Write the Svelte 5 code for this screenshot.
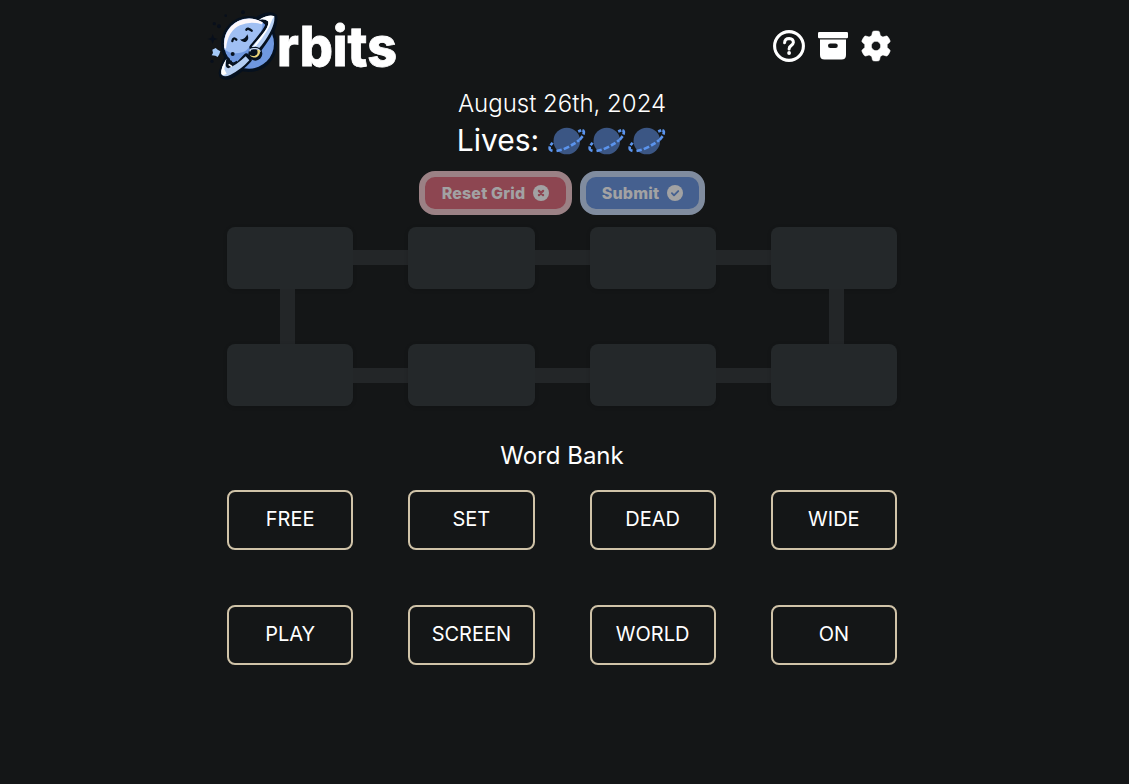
<script>
  const bank = ['FREE', 'SET', 'DEAD', 'WIDE', 'PLAY', 'SCREEN', 'WORLD', 'ON'];
  const lives = [1, 2, 3];
</script>

<div class="page">
  <header>
    <div class="brand">
      <svg class="planet" width="90" height="80" viewBox="-2 -2 270 240" aria-hidden="true">
        <g fill="#080f1b">
          <circle cx="41" cy="54" r="5" /><circle cx="75" cy="30" r="4" /><circle cx="127" cy="20" r="6" /><circle cx="55" cy="62" r="6" /><circle cx="34" cy="167" r="5" />
          <path d="M36 85l4 11 11 4-11 4-4 11-4-11-11-4 11-4z" />
        </g>
        <g fill="#06111f" stroke="#06111f" stroke-width="18" stroke-linejoin="round">
          <circle cx="145" cy="115" r="75" />
          <path d="M176 38Q208 22 221 33Q226 64 186 120Q119 201 84 212Q60 218 64 198Q67 180 80 162Z" />
        </g>
        <circle cx="145" cy="114" r="75" fill="#6f98e0" />
        <path d="M72 132A75 75 0 0 1 186 51Q187 85 149 118Q141 135 125 140Q96 149 72 132Z" fill="#a0bff3" />
        <path d="M71 127Q66 73 112 47Q148 28 186 50L184 56Q148 45 118 59Q81 76 76 129Z" fill="#fcf7fb" />
        <g fill="#06111f" stroke="#06111f" stroke-width="19" stroke-linejoin="round">
          <path d="M204 48Q207 60 185 89L156 125L173 131L188 110Q214 75 217 47Z" />
          <path d="M78 163Q66 186 68 196Q84 199 117 174L137 153L144 162Q118 190 90 207Q68 216 64 202Z" />
        </g>
        <path d="M86 166Q91 186 112 171" fill="none" stroke="#06111f" stroke-width="14" />
        <path d="M175 42Q205 25 221 32Q225 62 183 119L171 132L153 123L185 87Q207 60 202 47Q193 38 175 42Z" fill="#b7d0f5" />
        <path d="M175 42Q207 24 221 32Q215 39 210 53Q204 74 166 121L157 123L185 86Q207 58 202 47Q193 38 175 42Z" fill="#fff" />
        <path d="M77 160Q59 188 62 205Q68 218 90 207Q121 192 146 164L135 152Q108 178 83 188Q71 186 77 160Z" fill="#b5cef2" />
        <path d="M77 160Q59 188 62 205Q66 211 78 204L71 191Q73 174 77 160Z" fill="#fff" />
        <circle cx="164" cy="144" r="21" fill="#06111f" />
        <path d="M147 137Q149 127 162 129Q174 127 179 138" fill="none" stroke="#cadcf8" stroke-width="4" />
        <path d="M176 132A16 16 0 1 1 147 147Q158 155 168 147Q173 141 169 134Z" fill="#e9d479" />
        <g fill="none" stroke="#06111f" stroke-width="7" stroke-linecap="round" stroke-linejoin="round">
          <path d="M95 106Q98 93 107 102M137 72Q140 65 153 75" />
        </g>
        <path d="M118 101Q133 103 140 86Q147 102 136 108Q125 112 118 101Z" fill="#06111f" />
        <circle cx="96" cy="145" r="6" fill="#06111f" />
        <path d="M45 127L51 132L59 137L56 146L51 154L44 150L33 149L37 142L35 132Z" fill="#a6caf8" />
        <path d="M84 176L94 183" stroke="#fff" stroke-width="5" />
      </svg>
      <svg class="name" width="122" height="80" viewBox="0 0 122 80" role="img">
        <text x="-1" y="61" textLength="120" lengthAdjust="spacingAndGlyphs">rbits</text>
      </svg>
    </div>
    <nav>
      <svg width="32" height="32" viewBox="0 0 32 32" fill="none" stroke="#fff">
        <circle cx="16" cy="16" r="14.4" stroke-width="3.1" />
        <path d="M11.6 12.8Q11.8 8.5 16.2 8.5Q20.4 8.7 20.4 12.4Q20.2 14.3 18.1 15.6Q16.1 16.8 16.1 18.9" stroke-width="3" stroke-linecap="round" />
        <circle cx="16.1" cy="23" r="1.9" fill="#fff" stroke="none" />
      </svg>
      <svg class="archive" width="30" height="28" viewBox="0 0 30 28" fill="#fff">
        <rect width="30" height="6.3" rx="1.3" />
        <path fill-rule="evenodd" d="M2 7.4H28V23Q28 27.5 23.5 27.5H6.5Q2 27.5 2 23ZM12.3 11.4A2.3 2.3 0 0 0 12.3 16H17.5A2.3 2.3 0 0 0 17.5 11.4Z" />
      </svg>
      <svg class="gear" width="30" height="30" viewBox="0 0 512 512" fill="#fff">
        <path stroke="#fff" stroke-width="10" d="M495.9 166.6c3.2 8.7 .5 18.4-6.4 24.6l-43.3 39.4c1.1 8.3 1.7 16.8 1.7 25.4s-.6 17.1-1.7 25.4l43.3 39.4c6.9 6.2 9.6 15.9 6.4 24.6c-4.4 11.9-9.7 23.3-15.8 34.3l-4.7 8.1c-6.6 11-14 21.4-22.1 31.2c-5.9 7.2-15.7 9.6-24.5 6.8l-55.7-17.7c-13.4 10.3-28.2 18.9-44 25.4l-12.5 57.1c-2 9.1-9 16.3-18.2 17.8c-13.8 2.3-28 3.5-42.5 3.5s-28.7-1.2-42.5-3.5c-9.2-1.5-16.2-8.7-18.2-17.8l-12.5-57.1c-15.8-6.5-30.6-15.1-44-25.4L83.1 425.9c-8.8 2.8-18.6 .3-24.5-6.8c-8.1-9.8-15.5-20.2-22.1-31.2l-4.7-8.1c-6.1-11-11.4-22.4-15.8-34.3c-3.2-8.7-.5-18.4 6.4-24.6l43.3-39.4C64.6 273.1 64 264.6 64 256s.6-17.1 1.7-25.4L22.4 191.2c-6.9-6.2-9.6-15.9-6.4-24.6c4.4-11.9 9.7-23.3 15.8-34.3l4.7-8.1c6.6-11 14-21.4 22.1-31.2c5.9-7.2 15.7-9.6 24.5-6.8l55.7 17.7c13.4-10.3 28.2-18.9 44-25.4l12.5-57.1c2-9.1 9-16.3 18.2-17.8C227.3 1.2 241.5 0 256 0s28.7 1.2 42.5 3.5c9.2 1.5 16.2 8.7 18.2 17.8l12.5 57.1c15.8 6.5 30.6 15.1 44 25.4l55.7-17.7c8.8-2.8 18.6-.3 24.5 6.8c8.1 9.8 15.5 20.2 22.1 31.2l4.7 8.1c6.1 11 11.4 22.4 15.8 34.3zM256 336a80 80 0 1 0 0-160 80 80 0 1 0 0 160z" />
      </svg>
    </nav>
  </header>

  <div class="date">August 26th, 2024</div>
  <div class="lives">
    <span>Lives:</span>
    {#each lives as life (life)}
      <svg width="40" height="32" viewBox="0 0 40 32">
        <circle cx="19.8" cy="17" r="13.3" fill="#3b5684" />
        <g fill="none" stroke="#5b94ed" stroke-width="2.7">
          <path d="M31.2 7.5L34.2 6.2M35.4 6.3Q37.7 7 36.4 10.4M35.6 12.2L32.6 16M5.6 18.7L3.6 21.3M2.9 22.6Q1.6 26 5.5 26.9" />
          <path d="M9.5 27L14.7 25.8M16.8 25.1L22.1 22.6M24 21.5L28.5 18.9M30.1 17.7L32.2 16" />
        </g>
      </svg>
    {/each}
  </div>

  <div class="actions">
    <button class="reset">Reset Grid
      <svg width="16" height="16" viewBox="0 0 16 16"><circle cx="8" cy="8" r="8" fill="#a2a2a3" /><path d="M5.9 5.9l4.2 4.2m0-4.2l-4.2 4.2" stroke="#8d4651" stroke-width="2.2" stroke-linecap="round" /></svg>
    </button>
    <button class="submit">Submit
      <svg width="16" height="16" viewBox="0 0 16 16"><circle cx="8" cy="8" r="8" fill="#a2a2a3" /><path d="M4.9 8.2l2.1 2.1 4.2-4.2" fill="none" stroke="#45608f" stroke-width="1.9" stroke-linecap="round" stroke-linejoin="round" /></svg>
    </button>
  </div>

  <div class="orbit">
    {#each [0, 1, 2, 3, 4, 5, 6, 7] as i (i)}
      <div class="slot" class:link={i % 4 !== 3} class:low={i > 3} class:down-left={i === 0} class:down-right={i === 3}></div>
    {/each}
  </div>

  <h2>Word Bank</h2>
  <div class="bank">
    {#each bank as word (word)}
      <div class="word">{word}</div>
    {/each}
  </div>
</div>

<style>
  :global(body) { margin: 0; background: #141617; }
  .page { box-sizing: border-box; width: 670px; height: 784px; margin-left: 227px; color: #fff; font-family: Inter, sans-serif; }
  header { display: flex; justify-content: space-between; height: 89px; margin-left: -27px; padding: 5px 6px 0 0; box-sizing: border-box; }
  .brand { display: flex; }
  .name { margin-left: -12px; overflow: visible; }
  .name text { font: 800 55px Inter, sans-serif; fill: #fff; stroke: #fff; stroke-width: .8px; }
  nav { display: flex; align-items: flex-start; padding-top: 25px; }
  .archive { margin: 2px 0 0 13px; }
  .gear { margin: 1px 0 0 13px; overflow: visible; }
  .date { height: 30px; line-height: 30px; font-size: 24px; font-weight: 300; text-align: center; }
  .lives { display: flex; justify-content: center; align-items: center; height: 42px; font-size: 30px; }
  .lives span { margin-right: 8px; }
  .actions { display: flex; justify-content: center; gap: 8px; margin-top: 10px; }
  button { box-sizing: border-box; display: flex; align-items: center; justify-content: center; gap: 8px; height: 44px; padding: 0; border: 6px solid; border-radius: 16px; color: #a2a2a3; font: 800 16px Inter, sans-serif; letter-spacing: .17px; }
  .reset { width: 153px; background: #8d4651; border-color: #9b8185; }
  .submit { width: 125px; background: #45608f; border-color: #808c9f; }
  .orbit { display: grid; grid-template-columns: repeat(4, 1fr); grid-auto-rows: 62px; gap: 55px; margin-top: 12px; }
  .slot { position: relative; border-radius: 8px; background: #24282a; box-shadow: 0 1px 4px #0002; }
  .link::after { content: ''; position: absolute; left: 100%; top: 23px; width: 55px; height: 15px; background: #232628; }
  .low.link::after { top: 24px; }
  .down-left::before, .down-right::before { content: ''; position: absolute; top: 100%; left: 53px; width: 15px; height: 55px; background: #232628; }
  .down-right::before { left: 58px; }
  h2 { margin: 33px 0 0; height: 34px; line-height: 34px; font-size: 24px; font-weight: 400; text-align: center; }
  .bank { display: grid; grid-template-columns: repeat(4, 1fr); grid-auto-rows: 60px; gap: 55px; margin-top: 17px; }
  .word { box-sizing: border-box; display: flex; justify-content: center; align-items: center; padding-bottom: 2px; border: 2px solid #d0c3a8; border-radius: 8px; font-size: 20px; }
</style>
